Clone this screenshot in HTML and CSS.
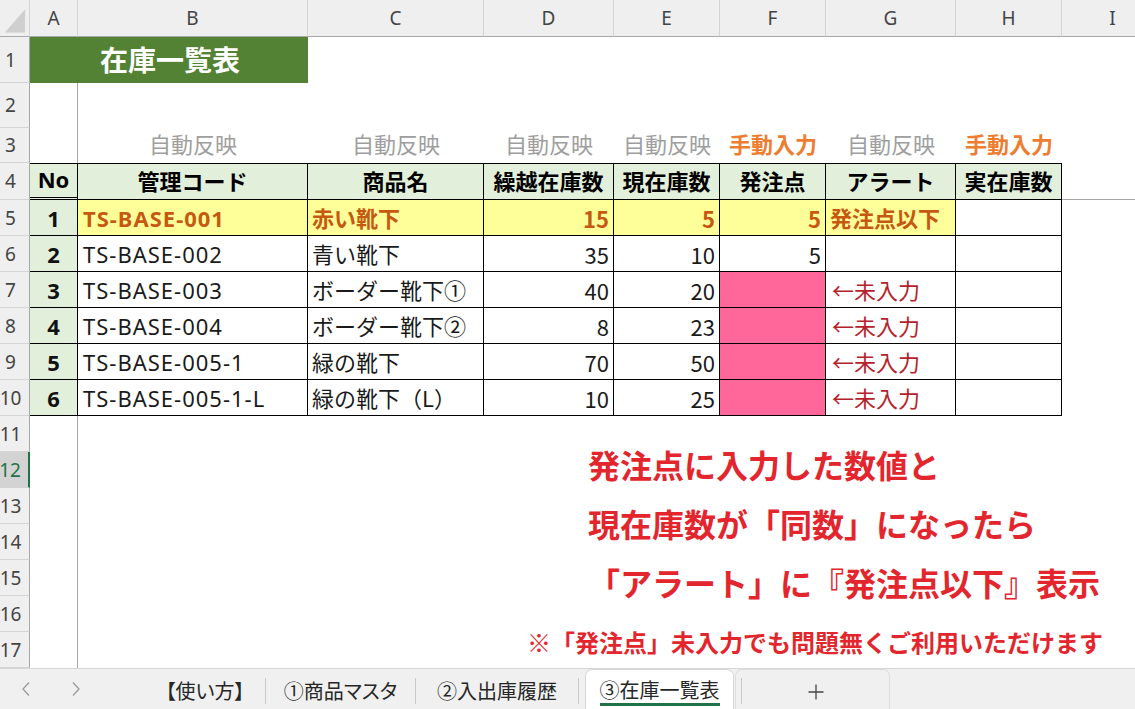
FILE: index.html
```html
<!DOCTYPE html>
<html lang="ja">
<head>
<meta charset="utf-8">
<title>在庫一覧表</title>
<link rel="stylesheet" href="styles.css">
</head>
<body>
<div class="app">
  <div class="sheet">
    <!-- column headers -->
    <div class="corner"><svg width="30" height="37" viewBox="0 0 30 37"><polygon points="26,9 26,33 5,33" fill="#cfcfcf"/></svg></div>
    <div class="ch">A</div><div class="ch">B</div><div class="ch">C</div><div class="ch">D</div><div class="ch">E</div><div class="ch">F</div><div class="ch">G</div><div class="ch">H</div><div class="ch">I</div>

    <!-- row 1 -->
    <div class="rh">1</div>
    <div class="title">在庫一覧表</div>
    <div class="span7"></div>

    <!-- row 2 -->
    <div class="rh">2</div>
    <div class="fz"></div>
    <div class="span8"></div>

    <!-- row 3 -->
    <div class="rh">3</div>
    <div class="fz"></div>
    <div class="lbl auto">自動反映</div>
    <div class="lbl auto">自動反映</div>
    <div class="lbl auto">自動反映</div>
    <div class="lbl auto">自動反映</div>
    <div class="lbl manual">手動入力</div>
    <div class="lbl auto">自動反映</div>
    <div class="lbl manual">手動入力</div>
    <div></div>

    <!-- row 4 -->
    <div class="rh">4</div>
    <div class="t top hd dbl latin">No</div>
    <div class="t top hd">管理コード</div>
    <div class="t top hd">商品名</div>
    <div class="t top hd">繰越在庫数</div>
    <div class="t top hd">現在庫数</div>
    <div class="t top hd">発注点</div>
    <div class="t top hd">アラート</div>
    <div class="t top hd">実在庫数</div>
    <div class="fzb"></div>

    <!-- row 5 -->
    <div class="rh">5</div>
    <div class="t no">1</div>
    <div class="t hl code">TS-BASE-001</div>
    <div class="t hl txt">赤い靴下</div>
    <div class="t hl num">15</div>
    <div class="t hl num">5</div>
    <div class="t hl num">5</div>
    <div class="t hl txt">発注点以下</div>
    <div class="t"></div>
    <div></div>

    <!-- row 6 -->
    <div class="rh">6</div>
    <div class="t no">2</div>
    <div class="t code">TS-BASE-002</div>
    <div class="t txt">青い靴下</div>
    <div class="t num">35</div>
    <div class="t num">10</div>
    <div class="t num">5</div>
    <div class="t"></div>
    <div class="t"></div>
    <div></div>

    <!-- row 7 -->
    <div class="rh">7</div>
    <div class="t no">3</div>
    <div class="t code">TS-BASE-003</div>
    <div class="t txt">ボーダー靴下①</div>
    <div class="t num">40</div>
    <div class="t num">20</div>
    <div class="t pk"></div>
    <div class="t txt warn">←未入力</div>
    <div class="t"></div>
    <div></div>

    <!-- row 8 -->
    <div class="rh">8</div>
    <div class="t no">4</div>
    <div class="t code">TS-BASE-004</div>
    <div class="t txt">ボーダー靴下②</div>
    <div class="t num">8</div>
    <div class="t num">23</div>
    <div class="t pk"></div>
    <div class="t txt warn">←未入力</div>
    <div class="t"></div>
    <div></div>

    <!-- row 9 -->
    <div class="rh">9</div>
    <div class="t no">5</div>
    <div class="t code">TS-BASE-005-1</div>
    <div class="t txt">緑の靴下</div>
    <div class="t num">70</div>
    <div class="t num">50</div>
    <div class="t pk"></div>
    <div class="t txt warn">←未入力</div>
    <div class="t"></div>
    <div></div>

    <!-- row 10 -->
    <div class="rh">10</div>
    <div class="t no">6</div>
    <div class="t code">TS-BASE-005-1-L</div>
    <div class="t txt">緑の靴下（L）</div>
    <div class="t num">10</div>
    <div class="t num">25</div>
    <div class="t pk"></div>
    <div class="t txt warn">←未入力</div>
    <div class="t"></div>
    <div></div>

    <!-- rows 11-17 -->
    <div class="rh">11</div><div class="fz"></div><div class="span8"></div>
    <div class="rh sel">12</div><div class="fz"></div><div class="span8"></div>
    <div class="rh">13</div><div class="fz"></div><div class="span8"></div>
    <div class="rh">14</div><div class="fz"></div><div class="span8"></div>
    <div class="rh">15</div><div class="fz"></div><div class="span8"></div>
    <div class="rh">16</div><div class="fz"></div><div class="span8"></div>
    <div class="rh">17</div><div class="fz"></div><div class="span8"></div>
  </div>

  <div class="note">
    <p>発注点に入力した数値と</p>
    <p>現在庫数が「同数」になったら</p>
    <p>「アラート」に『発注点以下』表示</p>
    <p class="small">※「発注点」未入力でも問題無くご利用いただけます</p>
  </div>

  <div class="tabbar">
    <div class="nav">
      <svg class="chev" width="10" height="16" viewBox="0 0 10 16"><polyline points="8,1.5 2,8 8,14.5" fill="none" stroke="#9a9a9a" stroke-width="1.3"/></svg>
      <svg class="chev" width="10" height="16" viewBox="0 0 10 16"><polyline points="2,1.5 8,8 2,14.5" fill="none" stroke="#9a9a9a" stroke-width="1.3"/></svg>
    </div>
    <div class="tab w1">【使い方】</div>
    <span class="sep"></span>
    <div class="tab w2">①商品マスタ</div>
    <span class="sep"></span>
    <div class="tab w3">②入出庫履歴</div>
    <span class="sep"></span>
    <div class="tab active"><span class="label">③在庫一覧表</span></div>
    <div class="plusbox">
      <span class="sep"></span>
      <div class="plus"><svg width="18" height="18" viewBox="0 0 18 18"><path d="M9 1.5V16.5M1.5 9H16.5" stroke="#444" stroke-width="1.3" fill="none"/></svg></div>
    </div>
  </div>
</div>
</body>
</html>
```

FILE: styles.css
```css
html, body {
  margin: 0;
  padding: 0;
}
body {
  width: 1135px;
  height: 709px;
  overflow: hidden;
  background: #fff;
  font-family: "Noto Sans CJK JP", "Noto Sans", sans-serif;
  color: #111;
}
.app {
  position: relative;
  width: 1135px;
  height: 709px;
  overflow: hidden;
  display: flex;
  flex-direction: column;
}
.sheet {
  flex: none;
  width: 1164px;
  display: grid;
  grid-template-columns: 30px 48px 230px 176px 130px 106px 106px 130px 106px 102px;
  grid-template-rows: 37px 46px 45px 35px 37px repeat(13, 36px);
}
.sheet > div {
  box-sizing: border-box;
  min-width: 0;
  display: flex;
  align-items: center;
  white-space: nowrap;
}

/* headers */
.corner {
  background: #efefef;
  border-right: 1px solid #d4d4d4;
  border-bottom: 1px solid #a8a8a8;
}
.corner svg { display: block; }
.ch {
  background: #efefef;
  border-right: 1px solid #d4d4d4;
  border-bottom: 1px solid #a8a8a8;
  justify-content: center;
  font-family: "Noto Sans", sans-serif;
  font-size: 19px;
  color: #444;
}
.rh {
  background: #efefef;
  border-right: 1px solid #a8a8a8;
  border-bottom: 1px solid #d4d4d4;
  justify-content: center;
  padding-right: 8px;
  font-family: "Noto Sans", sans-serif;
  font-size: 19px;
  color: #444;
}
.rh.sel {
  background: #d3d3d3;
  color: #217346;
  border-right: 2px solid #217346;
}

/* row 1 */
.title {
  grid-column: span 2;
  background: #548235;
  color: #fff;
  font-weight: 700;
  font-size: 28px;
  padding-left: 70px;
  padding-bottom: 2px;
}
.span7 { grid-column: span 7; }
.span8 { grid-column: span 8; }

/* freeze lines */
.fz { border-right: 1px solid #a6a6a6; }
.fzb { border-bottom: 1px solid #a6a6a6; }

/* row 3 labels */
.lbl {
  justify-content: center;
  font-size: 22px;
  padding-bottom: 6px;
}
.auto { color: #9e9e9e; }
.manual { color: #ed7d31; font-weight: 700; }

/* table */
.t {
  border-right: 1px solid #000;
  border-bottom: 1px solid #000;
}
.top { border-top: 1px solid #000; }
.dbl { border-bottom: 3px double #000; }
.hd {
  background: #e2efda;
  justify-content: center;
  font-weight: 700;
  font-size: 22px;
  color: #000;
  padding-bottom: 3px;
}
.latin { font-family: "Noto Sans", sans-serif; }
.no {
  background: #e2efda;
  justify-content: center;
  font-family: "Noto Sans", sans-serif;
  font-weight: 700;
  font-size: 22px;
  color: #111;
}
.code {
  padding-left: 5px;
  font-family: "Noto Sans", sans-serif;
  font-size: 22px;
  letter-spacing: 1px;
  color: #1a1a1a;
}
.txt {
  padding-left: 4px;
  font-size: 22px;
  color: #1a1a1a;
  padding-bottom: 1px;
}
.num {
  justify-content: flex-end;
  padding-right: 4px;
  font-size: 22px;
  color: #1a1a1a;
}
.hl {
  background: #ffff99;
  font-weight: 700;
}
.sheet > .hl { color: #c65911; }
.pk { background: #ff6699; }
.sheet > .warn {
  color: #b5222b;
  padding-left: 6px;
}

/* floating note */
.note {
  position: absolute;
  left: 527px;
  top: 435px;
  color: #e3262d;
  font-weight: 700;
}
.note p {
  margin: 0;
  font-size: 32px;
  line-height: 59px;
  padding-left: 61px;
  white-space: nowrap;
}
.note p.small {
  font-size: 24px;
  padding-left: 0;
}

/* sheet tab bar */
.tabbar {
  flex: 1;
  display: flex;
  align-items: stretch;
  background: #f0f0f0;
  border-top: 1px solid #d6d6d6;
}
.nav {
  width: 145px;
  display: flex;
  align-items: center;
  padding-left: 21px;
  gap: 40px;
  box-sizing: border-box;
}
.chev { display: block; }
.tab {
  display: flex;
  align-items: center;
  justify-content: center;
  padding-top: 3px;
  font-size: 20px;
  color: #262626;
  font-feature-settings: "palt";
  white-space: nowrap;
  box-sizing: border-box;
}
.w1 { width: 120px; }
.w2 { width: 149px; }
.w3 { width: 162px; }
.sep {
  align-self: center;
  width: 1px;
  height: 26px;
  background: #c8c8c8;
  margin-top: 3px;
}
.tab.active {
  width: 149px;
  margin-left: 6px;
  align-items: flex-start;
  padding-top: 7px;
  background: #fff;
  border: 1px solid #d8d8d8;
  border-bottom: none;
  border-radius: 7px 7px 0 0;
}
.label {
  display: block;
  line-height: 26px;
  border-bottom: 3px solid #217346;
}
.plusbox {
  width: 155px;
  margin-left: 1px;
  display: flex;
  align-items: stretch;
  padding-left: 5px;
  border: 1px solid #dcdcdc;
  border-bottom: none;
  border-radius: 7px 7px 0 0;
  box-sizing: border-box;
}
.plus {
  flex: 1;
  display: flex;
  align-items: center;
  justify-content: center;
  padding-top: 4px;
}
.plus svg { display: block; }
```
